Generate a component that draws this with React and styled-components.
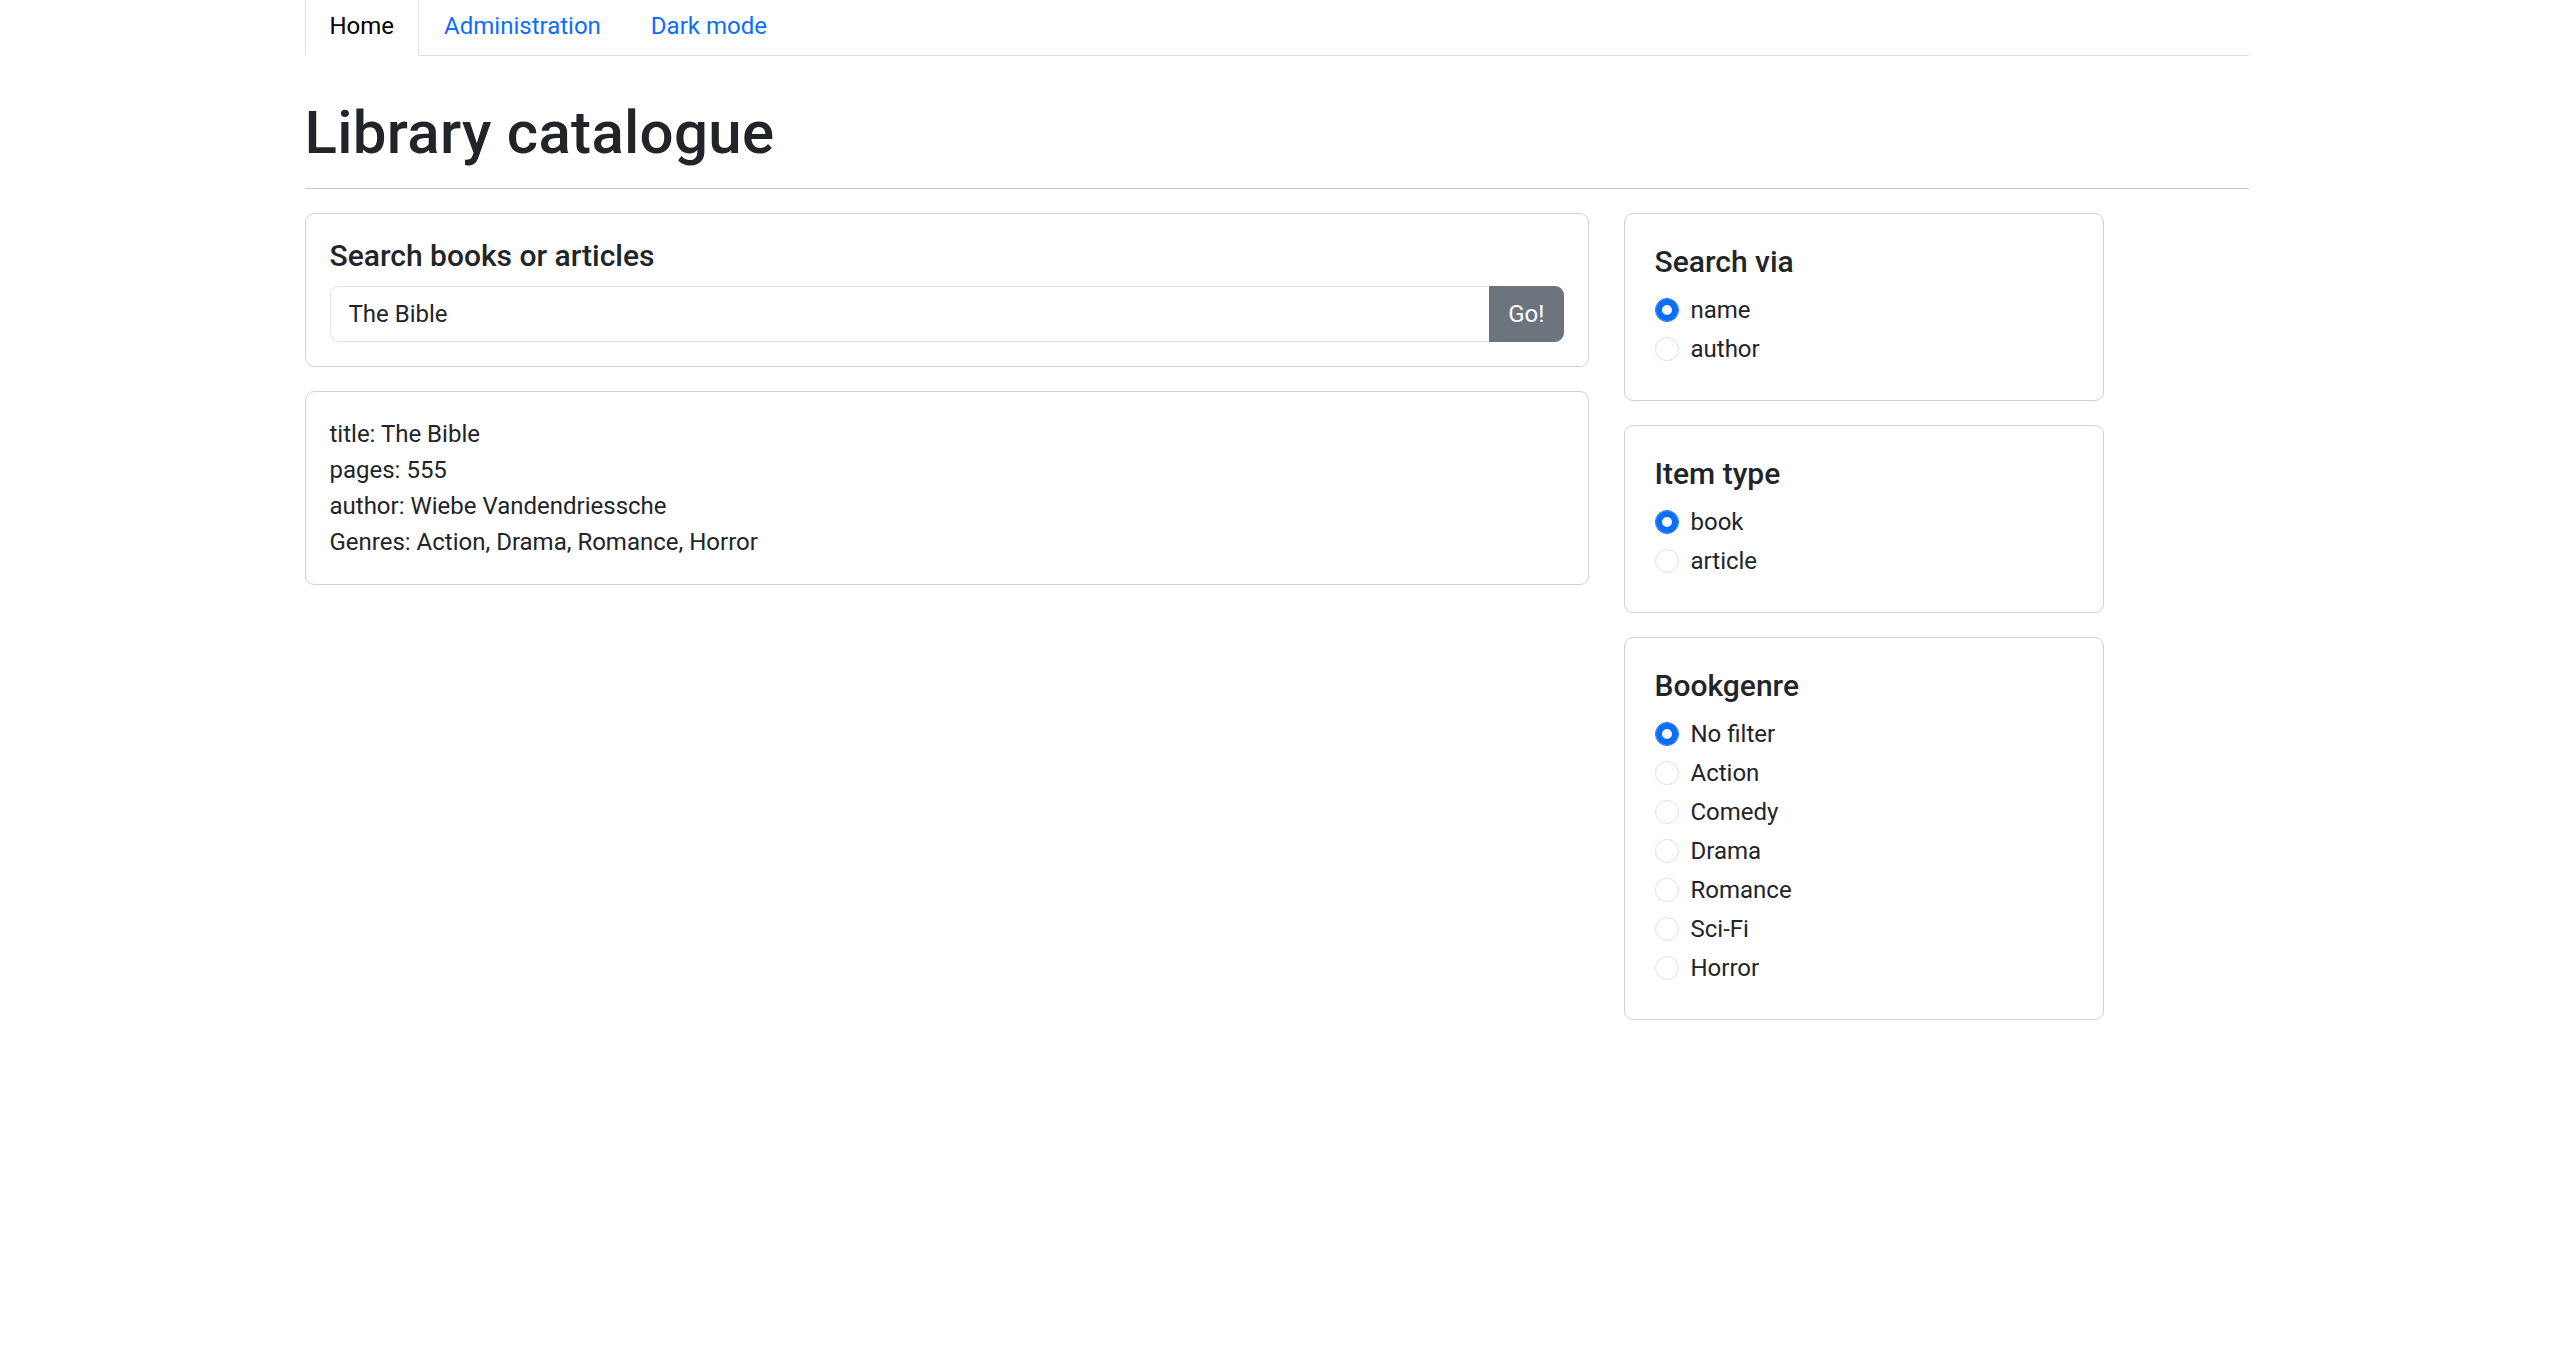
import React, { useState } from 'react'
import styled, { createGlobalStyle } from 'styled-components'

const GlobalStyle = createGlobalStyle`
  * {
    box-sizing: border-box;
  }
  body {
    margin: 0;
    font-family: Roboto, "Segoe UI", "Liberation Sans", sans-serif;
    font-size: 24px;
    line-height: 1.5;
    color: #212529;
    background-color: #fff;
  }
`

const searchOptions = ['name', 'author']
const typeOptions = ['book', 'article']
const genreOptions = ['No filter', 'Action', 'Comedy', 'Drama', 'Romance', 'Sci-Fi', 'Horror']

function RadioGroup({ title, name, options, value, onChange }) {
    return (
        <Card $pad={30}>
            <CardTitle>{title}</CardTitle>
            {options.map((opt) => (
                <FormCheck key={opt}>
                    <Radio
                        type='radio'
                        name={name}
                        checked={value === opt}
                        onChange={() => onChange(opt)}
                    />
                    {opt}
                </FormCheck>
            ))}
        </Card>
    )
}

export default function App() {
    const [query, setQuery] = useState('The Bible')
    const [via, setVia] = useState('name')
    const [itemType, setItemType] = useState('book')
    const [genre, setGenre] = useState('No filter')

    return (
        <Page>
            <GlobalStyle />
            <Tabs>
                <li><TabLink href='#' $active>Home</TabLink></li>
                <li><TabLink href='#'>Administration</TabLink></li>
                <li><TabLink href='#'>Dark mode</TabLink></li>
            </Tabs>

            <Header>
                <Title>Library catalogue</Title>
            </Header>

            <Layout>
                <LeftCol>
                    <Card $pad={24}>
                        <CardTitle>Search books or articles</CardTitle>
                        <InputGroup>
                            <SearchInput
                                type='text'
                                value={query}
                                onChange={(e) => setQuery(e.target.value)}
                            />
                            <GoBtn>Go!</GoBtn>
                        </InputGroup>
                    </Card>
                    <Card $pad={24}>
                        <InfoLine>title: The Bible</InfoLine>
                        <InfoLine>pages: 555</InfoLine>
                        <InfoLine>author: Wiebe Vandendriessche</InfoLine>
                        <InfoLine>Genres: Action, Drama, Romance, Horror</InfoLine>
                    </Card>
                </LeftCol>

                <RightCol>
                    <RadioGroup title='Search via' name='via' options={searchOptions} value={via} onChange={setVia} />
                    <RadioGroup title='Item type' name='type' options={typeOptions} value={itemType} onChange={setItemType} />
                    <RadioGroup title='Bookgenre' name='genre' options={genreOptions} value={genre} onChange={setGenre} />
                </RightCol>
            </Layout>
        </Page>
    )
}

const Page = styled.div`
width:1944px;
margin:0 auto;
`
const Tabs = styled.ul`
display:flex;
list-style:none;
margin:0;
padding:0;
border-bottom:1px solid #dee2e6;
`
const TabLink = styled.a`
display:block;
padding:8px 24px 11px;
margin-bottom:-1px;
text-decoration:none;
color:${(p) => (p.$active ? '#000' : '#0d6efd')};
background-color:${(p) => (p.$active ? '#fff' : 'transparent')};
border:1px solid ${(p) => (p.$active ? '#dee2e6' : 'transparent')};
border-top:none;
border-bottom-color:${(p) => (p.$active ? '#fff' : 'transparent')};
`
const Header = styled.div`
padding-bottom:19px;
border-bottom:1px solid #c9cacb;
`
const Title = styled.h1`
margin:41px 0 0;
font-size:60px;
font-weight:500;
line-height:1.2;
letter-spacing:0.3px;
`
const Layout = styled.div`
display:flex;
align-items:flex-start;
gap:35px;
margin-top:24px;
`
const LeftCol = styled.div`
width:1284px;
display:flex;
flex-direction:column;
gap:24px;
`
const RightCol = styled.div`
width:480px;
display:flex;
flex-direction:column;
gap:24px;
`
const Card = styled.div`
border:1px solid #d2d2d2;
border-radius:9px;
background-color:#fff;
padding:${(p) => p.$pad}px;
`
const CardTitle = styled.h5`
margin:0 0 12px;
font-size:30px;
font-weight:500;
line-height:1.2;
`
const InputGroup = styled.div`
display:flex;
`
const SearchInput = styled.input`
flex:1;
height:56px;
padding:9px 18px;
font:inherit;
color:#212529;
border:1px solid #dee2e6;
border-right:none;
border-radius:9px 0 0 9px;
outline:none;
`
const GoBtn = styled.button`
height:56px;
padding:9px 18px;
font:inherit;
color:#fff;
background-color:#6c757d;
border:1px solid #6c757d;
border-radius:0 9px 9px 0;
cursor:pointer;
`
const InfoLine = styled.p`
margin:0;
`
const FormCheck = styled.label`
display:flex;
align-items:flex-start;
gap:12px;
min-height:36px;
margin-bottom:3px;
cursor:pointer;
`
const Radio = styled.input`
appearance:none;
width:24px;
height:24px;
margin:6px 0 0;
flex-shrink:0;
border:1px solid #dee2e6;
border-radius:50%;
background-color:#fff;
cursor:pointer;
&:checked{
    border-color:#0d6efd;
    box-shadow:inset 0 0 0 6px #0d6efd;
}
`
